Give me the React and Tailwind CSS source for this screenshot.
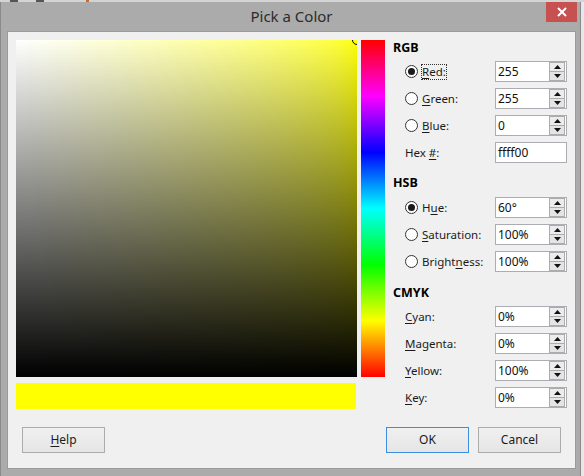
import React from "react";

const ui = "font-['Segoe_UI','Noto_Sans',sans-serif]";

function Mn({ children }) {
  return <span className="underline decoration-1 underline-offset-2">{children}</span>;
}

function Radio({ checked }) {
  return (
    <span className="flex h-[13px] w-[13px] shrink-0 items-center justify-center rounded-full border border-[#333] bg-white">
      {checked && <span className="h-[7px] w-[7px] rounded-full bg-[#1a1a1a]" />}
    </span>
  );
}

function Arrow({ up }) {
  return (
    <svg width="7" height="4" viewBox="0 0 7 4">
      <polygon points={up ? "0,4 7,4 3.5,0" : "0,0 7,0 3.5,4"} fill="#111" />
    </svg>
  );
}

function Spin({ value }) {
  return (
    <div className="flex h-[21px] w-[72px] items-center border border-[#abadb3] bg-white">
      <span className="flex-1 pl-[2px] text-[12px] leading-none text-[#111]">{value}</span>
      <div className="mr-[1px] flex h-[19px] w-[16px] flex-col">
        <div className="flex h-1/2 items-center justify-center border border-[#acacac] bg-[#ececec]">
          <Arrow up />
        </div>
        <div className="flex h-1/2 items-center justify-center border border-t-0 border-[#acacac] bg-[#e4e4e4]">
          <Arrow />
        </div>
      </div>
    </div>
  );
}

function Row({ radio, checked, focus, label, value, plain }) {
  let cls = "text-[11.5px] leading-[14px] text-[#1b1b1b] ";
  if (radio) cls += "ml-[3px] border " + (focus ? "border-dotted border-[#333]" : "border-transparent");
  return (
    <div className="flex h-[21px] items-center pl-[12px]">
      <div className="flex w-[90px] items-center">
        {radio && <Radio checked={checked} />}
        <span className={cls}>{label}</span>
      </div>
      {plain ? (
        <div className="flex h-[21px] w-[72px] items-center border border-[#abadb3] bg-white pl-[2px] text-[12px] leading-none text-[#111]">
          {value}
        </div>
      ) : (
        <Spin value={value} />
      )}
    </div>
  );
}

function Heading({ children }) {
  return <div className="h-[16px] text-[12.5px] font-bold leading-[16px] text-black">{children}</div>;
}

function Button({ children, primary }) {
  return (
    <button
      className={
        "flex h-[26px] w-[83px] items-center justify-center border bg-gradient-to-b from-[#f0f0f0] to-[#e5e5e5] text-[12px] text-[#1b1b1b] " +
        (primary ? "border-[#3c8fe0]" : "border-[#acacac]")
      }
    >
      {children}
    </button>
  );
}

export default function App() {
  return (
    <div className={"flex h-[476px] w-[584px] flex-col overflow-hidden bg-[#ababab] " + ui}>
      <div className="flex h-[2px] bg-[#d4d4d4]">
        <div className="ml-[10px] w-[8px] bg-[#555]" />
        <div className="ml-[18px] w-[8px] bg-[#555]" />
        <div className="ml-[42px] w-[3px] bg-[#c86a28]" />
      </div>
      <div className="flex flex-1">
        <div className="flex w-[581px] flex-col border-l border-[#8a8a8a] border-r border-r-[#8a8a8a]">
          <div className="flex h-[29px] items-start">
            <div className="flex h-[29px] flex-1 items-center justify-center pl-[36px] text-[15px] text-[#2b2b2b]">
              Pick a Color
            </div>
            <div className="mr-[3px] flex h-[20px] w-[31px] items-center justify-center bg-[#c75050]">
              <svg width="10" height="10" viewBox="0 0 10 10">
                <path d="M1 1L9 9M9 1L1 9" stroke="#fff" strokeWidth="2" />
              </svg>
            </div>
          </div>
          <div className="ml-[6px] flex h-[438px] w-[569px] flex-col border border-[#9a9a9a] bg-[#f0f0f0]">
            <div className="flex pl-[8px] pt-[8px]">
              <div className="flex flex-col">
                <div className="relative h-[337px] w-[341px] overflow-hidden bg-gradient-to-r from-white to-[#ffff00]">
                  <div className="absolute inset-0 bg-gradient-to-t from-black to-transparent" />
                  <div className="absolute right-[-5px] top-[-5px] h-[10px] w-[10px] rounded-full border border-black" />
                </div>
                <div className="mt-[6px] h-[26px] w-[340px] bg-[#ffff00]" />
              </div>
              <div className="ml-[4px] h-[337px] w-[24px] bg-[linear-gradient(to_bottom,#ff0000,#ff00ff,#0000ff,#00ffff,#00ff00,#ffff00,#ff0000)]" />
              <div className="ml-[8px] flex flex-col">
                <Heading>RGB</Heading>
                <div className="mt-[5px] flex flex-col gap-[6px]">
                  <Row radio checked focus label={<><Mn>R</Mn>ed:</>} value="255" />
                  <Row radio label={<><Mn>G</Mn>reen:</>} value="255" />
                  <Row radio label={<><Mn>B</Mn>lue:</>} value="0" />
                  <Row plain label={<>Hex <Mn>#</Mn>:</>} value="ffff00" />
                </div>
                <div className="mt-[12px]">
                  <Heading>HSB</Heading>
                </div>
                <div className="mt-[6px] flex flex-col gap-[6px]">
                  <Row radio checked label={<>H<Mn>u</Mn>e:</>} value="60°" />
                  <Row radio label={<><Mn>S</Mn>aturation:</>} value="100%" />
                  <Row radio label={<>Bright<Mn>n</Mn>ess:</>} value="100%" />
                </div>
                <div className="mt-[13px]">
                  <Heading>CMYK</Heading>
                </div>
                <div className="mt-[5px] flex flex-col gap-[6px]">
                  <Row label={<><Mn>C</Mn>yan:</>} value="0%" />
                  <Row label={<><Mn>M</Mn>agenta:</>} value="0%" />
                  <Row label={<><Mn>Y</Mn>ellow:</>} value="100%" />
                  <Row label={<><Mn>K</Mn>ey:</>} value="0%" />
                </div>
              </div>
            </div>
            <div className="mt-[18px] flex items-center px-[14px]">
              <Button>
                <Mn>H</Mn>elp
              </Button>
              <div className="flex-1" />
              <Button primary>OK</Button>
              <div className="w-[9px]" />
              <Button>Cancel</Button>
            </div>
          </div>
        </div>
        <div className="flex w-[3px] flex-col bg-[#e8e8e8]" />
      </div>
    </div>
  );
}
